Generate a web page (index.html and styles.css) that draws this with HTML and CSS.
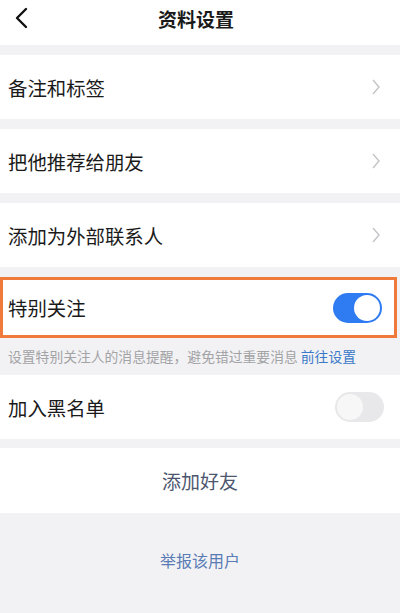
FILE: index.html
```html
<!DOCTYPE html>
<html lang="zh-CN">
<head>
    <meta charset="UTF-8">
    <meta name="viewport" content="width=device-width, initial-scale=1.0">
    <title>资料设置</title>
    <link rel="stylesheet" href="styles.css">
</head>
<body>
    <div class="header">
        <svg class="back" width="16" height="24" viewBox="0 0 16 24">
            <path d="M13 3 L4 12 L13 21" fill="none" stroke="#111" stroke-width="2.4" stroke-linecap="round" stroke-linejoin="round"/>
        </svg>
        <h1>资料设置</h1>
    </div>

    <div class="row first">
        <span>备注和标签</span>
        <svg class="chevron" width="10" height="18" viewBox="0 0 10 18"><path d="M2 2 L8 9 L2 16" fill="none" stroke="#c4c4c8" stroke-width="1.4"/></svg>
    </div>
    <div class="row">
        <span>把他推荐给朋友</span>
        <svg class="chevron" width="10" height="18" viewBox="0 0 10 18"><path d="M2 2 L8 9 L2 16" fill="none" stroke="#c4c4c8" stroke-width="1.4"/></svg>
    </div>
    <div class="row">
        <span>添加为外部联系人</span>
        <svg class="chevron" width="10" height="18" viewBox="0 0 10 18"><path d="M2 2 L8 9 L2 16" fill="none" stroke="#c4c4c8" stroke-width="1.4"/></svg>
    </div>

    <div class="row highlight">
        <span>特别关注</span>
        <div class="toggle on"><div class="knob"></div></div>
    </div>
    <p class="caption">设置特别关注人的消息提醒，避免错过重要消息 <a>前往设置</a></p>

    <div class="row block">
        <span>加入黑名单</span>
        <div class="toggle"><div class="knob"></div></div>
    </div>

    <div class="action">添加好友</div>
    <div class="report">举报该用户</div>
</body>
</html>
```

FILE: styles.css
```css
body {
    margin: 0;
    background: #f2f2f4;
    color: #1a1a1a;
    font-family: "Noto Sans CJK SC", "Noto Sans", sans-serif;
    height: 613px;
    overflow: hidden;
}

.header {
    height: 45px;
    background: white;
    display: flex;
    align-items: center;
    justify-content: center;
    position: relative;
}

.header .back {
    position: absolute;
    left: 13px;
    top: 6px;
}

.header h1 {
    margin: 0;
    font-size: 19px;
    font-weight: bold;
    margin-top: -8px;
    margin-left: -8px;
}

.row {
    height: 64px;
    background: white;
    display: flex;
    align-items: center;
    justify-content: space-between;
    padding: 0 19px 0 8px;
    margin-top: 10px;
    font-size: 19.4px;
}

.row.highlight {
    height: 55px;
    margin-top: 10px;
    border: 3px solid #ef7a3c;
    margin-right: 3px;
    padding: 0 12px 0 5px;
}

.row.block {
    margin-top: 0;
    height: 64px;
    padding-right: 16px;
}

.toggle {
    width: 49px;
    height: 30px;
    border-radius: 15px;
    background: #e8e8ea;
    display: flex;
    align-items: center;
    padding: 0 2px;
    box-sizing: border-box;
}

.toggle .knob {
    width: 26px;
    height: 26px;
    border-radius: 50%;
    background: #f7f7f7;
}

.toggle.on {
    background: #2f7bf2;
    justify-content: flex-end;
}

.toggle.on .knob {
    background: white;
}

.caption {
    margin: 0;
    height: 37px;
    line-height: 37px;
    padding-left: 8px;
    font-size: 13.8px;
    color: #a3a3a6;
    white-space: nowrap;
}

.caption a {
    color: #3a78c8;
}

.action {
    margin-top: 9px;
    height: 65px;
    background: white;
    display: flex;
    align-items: center;
    justify-content: center;
    font-size: 19px;
    color: #4c566e;
}

.report {
    height: 100px;
    display: flex;
    align-items: center;
    justify-content: center;
    font-size: 16px;
    color: #5a7cb4;
    padding-bottom: 6px;
    box-sizing: border-box;
}
```
